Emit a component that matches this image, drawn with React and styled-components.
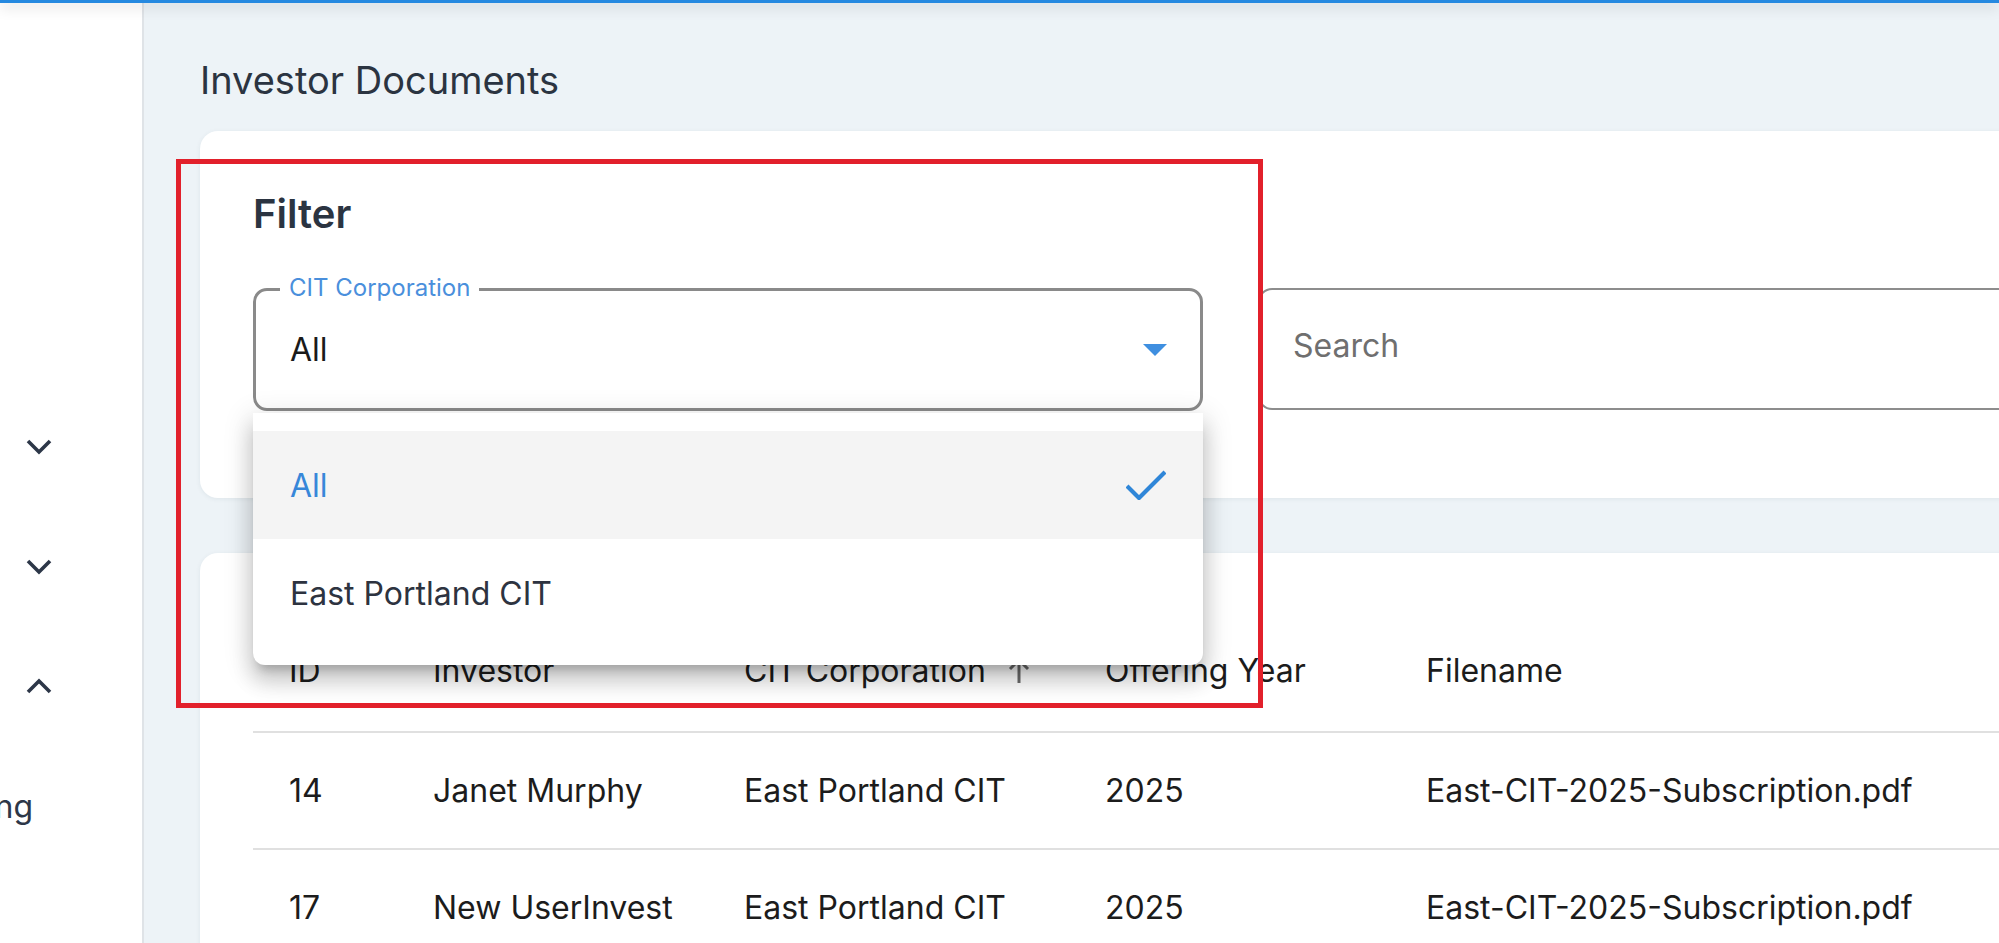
import React from 'react';
import styled, { createGlobalStyle } from 'styled-components';

const GlobalStyle = createGlobalStyle`
  html, body {
    margin: 0;
    padding: 0;
  }
  body {
    font-family: 'Inter', 'Liberation Sans', sans-serif;
    background: #edf3f7;
    overflow: hidden;
  }
  * {
    box-sizing: border-box;
  }
`;

const Page = styled.div`
  position: relative;
  width: 100vw;
  height: 100vh;
  display: flex;
  flex-direction: column;
  overflow: hidden;
`;

const TopBar = styled.div`
  position: relative;
  z-index: 5;
  height: 3px;
  flex-shrink: 0;
  background: #2589e0;
  box-shadow: 0 3px 14px rgba(0, 0, 0, 0.28);
`;

const Shell = styled.div`
  display: flex;
  flex: 1;
  min-height: 0;
`;

const Sidebar = styled.aside`
  width: 144px;
  flex-shrink: 0;
  background: #fff;
  border-right: 2px solid #dfe3e7;
  padding-top: 383px;
  display: flex;
  flex-direction: column;
`;

const NavRow = styled.div`
  height: 120px;
  display: flex;
  align-items: center;
  padding-left: ${(p) => (p.$flush ? 0 : 26)}px;
  color: #2d3748;
`;

/* sidebar is scrolled sideways in the capture: only the tail of this label shows */
const NavLabel = styled.div`
  width: 33px;
  overflow: hidden;
  display: flex;
  justify-content: flex-end;
  white-space: nowrap;
  font-size: 32px;
  color: #2d3748;
`;

const Main = styled.main`
  flex: 1;
  min-width: 0;
  overflow: hidden;
  background: #edf3f7;
  padding: 53px 0 0 56px;
`;

const PageTitle = styled.h1`
  margin: 0 0 27px;
  font-size: 38px;
  line-height: 48px;
  font-weight: 400;
  color: #2b3441;
`;

const Card = styled.section`
  position: relative;
  z-index: ${(p) => (p.$raised ? 2 : 1)};
  width: 1900px;
  background: #fff;
  border-radius: 18px;
  box-shadow: 0 1px 5px rgba(30, 50, 70, 0.07);
`;

const FilterCard = styled(Card)`
  height: 367px;
  padding: 59px 53px 0;
`;

const TableCard = styled(Card)`
  margin-top: 55px;
  height: 600px;
  padding: 56px 53px 0;
`;

const CardTitle = styled.h2`
  margin: 0;
  font-size: 40px;
  line-height: 48px;
  font-weight: 600;
  color: #2b3441;
`;

const FilterRow = styled.div`
  margin-top: 50px;
  display: flex;
  gap: 55px;
`;

const SelectWrap = styled.div`
  position: relative;
  width: 950px;
  flex-shrink: 0;
`;

const SelectBox = styled.div`
  position: relative;
  height: 123px;
  border: 3px solid #8a8a8a;
  border-radius: 14px;
  background: #fff;
  display: flex;
  align-items: center;
  justify-content: space-between;
  padding: 0 33px 0 34px;
  font-size: 32px;
  color: #1a1a1a;
`;

const FloatingLabel = styled.span`
  position: absolute;
  top: -15px;
  left: 24px;
  padding: 0 9px;
  background: #fff;
  font-size: 24px;
  line-height: 24px;
  color: #4a8fdc;
`;

const Menu = styled.ul`
  position: absolute;
  z-index: 10;
  top: calc(100% + 2px);
  left: 0;
  right: 0;
  margin: 0;
  padding: 18px 0;
  list-style: none;
  background: #fff;
  border-radius: 0 0 12px 12px;
  box-shadow: 0 10px 10px -6px rgba(0, 0, 0, 0.2), 0 16px 20px 2px rgba(0, 0, 0, 0.14),
    0 6px 28px 4px rgba(0, 0, 0, 0.12);
`;

const MenuItem = styled.li`
  height: 108px;
  display: flex;
  align-items: center;
  justify-content: space-between;
  padding: 0 37px;
  font-size: 32px;
  color: ${(p) => (p.$selected ? '#3787d9' : '#2d3340')};
  background: ${(p) => (p.$selected ? '#f4f4f4' : 'transparent')};
`;

const SearchInput = styled.input`
  width: 950px;
  height: 122px;
  flex-shrink: 0;
  border: 2px solid #8d8d8d;
  border-radius: 14px;
  padding: 0 33px 8px;
  font-family: 'Inter', 'Liberation Sans', sans-serif;
  font-size: 32px;
  color: #333;
  background: #fff;
  outline: none;
  &::placeholder {
    color: #6f6f6f;
  }
`;

const Row = styled.div`
  display: grid;
  grid-template-columns: 144px 311px 361px 321px 1fr;
  align-items: center;
  height: ${(p) => (p.$head ? 124 : 117)}px;
  border-bottom: 2px solid #e0e0e0;
  font-size: 32px;
  color: #1c1c1c;
`;

const Cell = styled.div`
  display: flex;
  align-items: center;
  padding-left: 36px;
  white-space: nowrap;
`;

const SortIcon = styled.svg`
  margin-left: 22px;
  flex-shrink: 0;
`;

const Highlight = styled.div`
  position: absolute;
  z-index: 20;
  left: 176px;
  top: 159px;
  width: 1087px;
  height: 549px;
  border: 5px solid #e2202b;
  pointer-events: none;
`;

const Chevron = ({ up }) => (
  <svg width="26" height="17" viewBox="0 0 26 17">
    <polyline
      points={up ? '2,14 13,3 24,14' : '2,3 13,14 24,3'}
      fill="none"
      stroke="#2d3748"
      strokeWidth="3.6"
    />
  </svg>
);

const CaretDown = () => (
  <svg width="24" height="12" viewBox="0 0 24 12">
    <polygon points="0,0 24,0 12,12" fill="#3f8fe0" />
  </svg>
);

const CheckMark = () => (
  <svg width="40" height="30" viewBox="0 0 40 30">
    <polyline points="1,16 13,28 39,2" fill="none" stroke="#2f86d8" strokeWidth="4.2" />
  </svg>
);

const ArrowUp = () => (
  <SortIcon width="22" height="26" viewBox="0 0 22 26">
    <path d="M11 3 L11 26" stroke="#6b6b6b" strokeWidth="3" />
    <polyline points="2,12 11,3 20,12" fill="none" stroke="#6b6b6b" strokeWidth="3" />
  </SortIcon>
);

const rows = [
  { id: 14, investor: 'Janet Murphy', corp: 'East Portland CIT', year: 2025, file: 'East-CIT-2025-Subscription.pdf' },
  { id: 17, investor: 'New UserInvest', corp: 'East Portland CIT', year: 2025, file: 'East-CIT-2025-Subscription.pdf' },
];

const App = () => {
  return (
    <Page>
      <GlobalStyle />
      <TopBar />
      <Shell>
        <Sidebar>
          <NavRow>
            <Chevron />
          </NavRow>
          <NavRow>
            <Chevron />
          </NavRow>
          <NavRow>
            <Chevron up />
          </NavRow>
          <NavRow $flush>
            <NavLabel>Reporting</NavLabel>
          </NavRow>
        </Sidebar>

        <Main>
          <PageTitle>Investor Documents</PageTitle>

          <FilterCard $raised>
            <CardTitle>Filter</CardTitle>
            <FilterRow>
              <SelectWrap>
                <SelectBox>
                  <FloatingLabel>CIT Corporation</FloatingLabel>
                  <span>All</span>
                  <CaretDown />
                </SelectBox>
                <Menu>
                  <MenuItem $selected>
                    All
                    <CheckMark />
                  </MenuItem>
                  <MenuItem>East Portland CIT</MenuItem>
                </Menu>
              </SelectWrap>
              <SearchInput type="text" placeholder="Search" />
            </FilterRow>
          </FilterCard>

          <TableCard>
            <Row $head>
              <Cell>ID</Cell>
              <Cell>Investor</Cell>
              <Cell>
                CIT Corporation
                <ArrowUp />
              </Cell>
              <Cell>Offering Year</Cell>
              <Cell>Filename</Cell>
            </Row>
            {rows.map((r) => (
              <Row key={r.id}>
                <Cell>{r.id}</Cell>
                <Cell>{r.investor}</Cell>
                <Cell>{r.corp}</Cell>
                <Cell>{r.year}</Cell>
                <Cell>{r.file}</Cell>
              </Row>
            ))}
          </TableCard>
        </Main>
      </Shell>
      <Highlight />
    </Page>
  );
};

export default App;
